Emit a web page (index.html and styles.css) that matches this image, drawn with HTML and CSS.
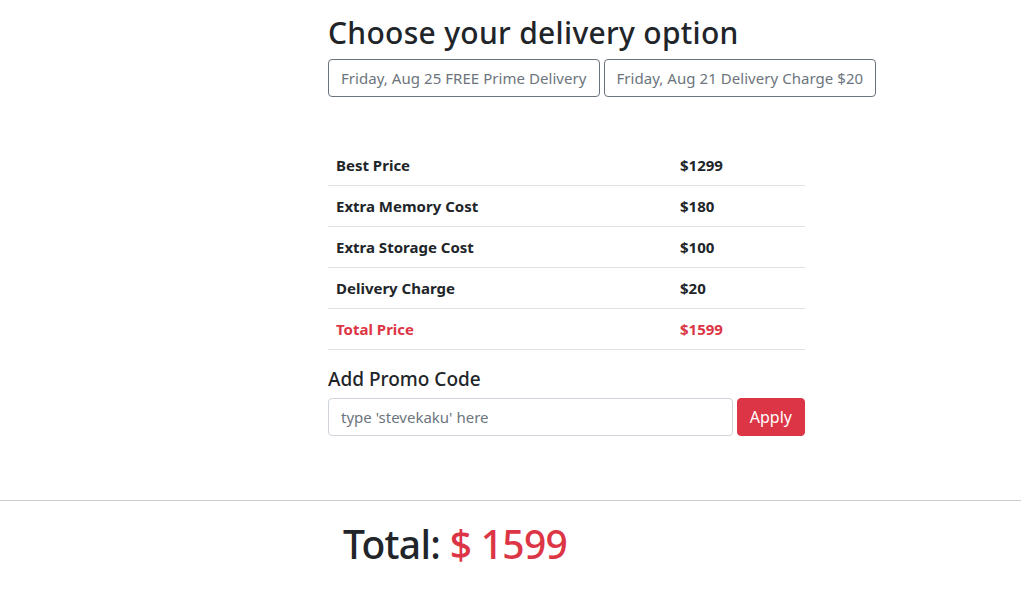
FILE: index.html
```html
<!DOCTYPE html>
<html>
<head>
<meta charset="utf-8">
<link rel="stylesheet" href="styles.css">
</head>
<body>
<main class="checkout">
  <h2 class="title">Choose your delivery option</h2>
  <div class="options">
    <button class="opt">Friday, Aug 25 FREE Prime Delivery</button>
    <button class="opt">Friday, Aug 21 Delivery Charge $20</button>
  </div>
  <table class="price-table">
    <tbody>
      <tr><td class="label">Best Price</td><td>$1299</td></tr>
      <tr><td class="label">Extra Memory Cost</td><td>$180</td></tr>
      <tr><td class="label">Extra Storage Cost</td><td>$100</td></tr>
      <tr><td class="label">Delivery Charge</td><td>$20</td></tr>
      <tr class="total-row"><td class="label">Total Price</td><td>$1599</td></tr>
    </tbody>
  </table>
  <h5 class="promo-title">Add Promo Code</h5>
  <div class="promo">
    <input class="promo-input" type="text" placeholder="type 'stevekaku' here">
    <button class="apply">Apply</button>
  </div>
</main>
<hr class="divider">
<footer class="summary">
  <h1 class="grand">Total: <span class="red">$ 1599</span></h1>
</footer>
</body>
</html>
```
FILE: styles.css
```css
html, body {
  margin: 0;
  padding: 0;
  background: #fff;
}
body {
  font-family: "Noto Sans", "Open Sans", sans-serif;
  color: #212529;
  font-size: 16px;
  line-height: 1.5;
}
.checkout {
  margin-left: 328px;
  width: 560px;
  padding-top: 14px;
}
.title {
  margin: 0 0 8px 0;
  font-size: 30px;
  font-weight: 500;
  line-height: 37px;
  letter-spacing: 0.3px;
}
.options {
  display: flex;
  gap: 4px;
}
.opt {
  font-family: inherit;
  font-size: 15px;
  color: #6c757d;
  background: #fff;
  border: 1px solid #6c757d;
  border-radius: 4px;
  height: 38px;
  padding: 0 12px;
  letter-spacing: 0.05px;
}
.price-table {
  margin-top: 48px;
  width: 477px;
  border-collapse: collapse;
}
.price-table td {
  padding: 8px;
  height: 24px;
  font-weight: 700;
  font-size: 15px;
  border-bottom: 1px solid #dee2e6;
  line-height: 24px;
}
.price-table td.label {
  width: 328px;
}
.total-row td {
  color: #dc3545;
}
.promo-title {
  margin: 18px 0 7px 0;
  font-size: 19px;
  font-weight: 500;
  line-height: 1.2;
}
.promo {
  display: flex;
  gap: 4px;
  width: 477px;
}
.promo-input {
  flex: 1;
  height: 38px;
  box-sizing: border-box;
  border: 1px solid #ced4da;
  border-radius: 4px;
  padding: 0 12px;
  font-family: inherit;
  font-size: 15px;
  color: #495057;
}
.promo-input::placeholder {
  color: #6c757d;
}
.apply {
  height: 38px;
  padding: 0 12px;
  background: #dc3545;
  color: #fff;
  border: 1px solid #dc3545;
  border-radius: 4px;
  font-family: inherit;
  font-size: 16px;
}
.divider {
  margin: 64px 0 0 0;
  border: 0;
  border-top: 1px solid #cccccc;
}
.summary {
  padding-left: 343px;
  padding-top: 20px;
}
.grand {
  margin: 0;
  font-size: 39px;
  font-weight: 500;
  line-height: 1.2;
  letter-spacing: -0.7px;
}
.red {
  color: #dc3545;
}
```
